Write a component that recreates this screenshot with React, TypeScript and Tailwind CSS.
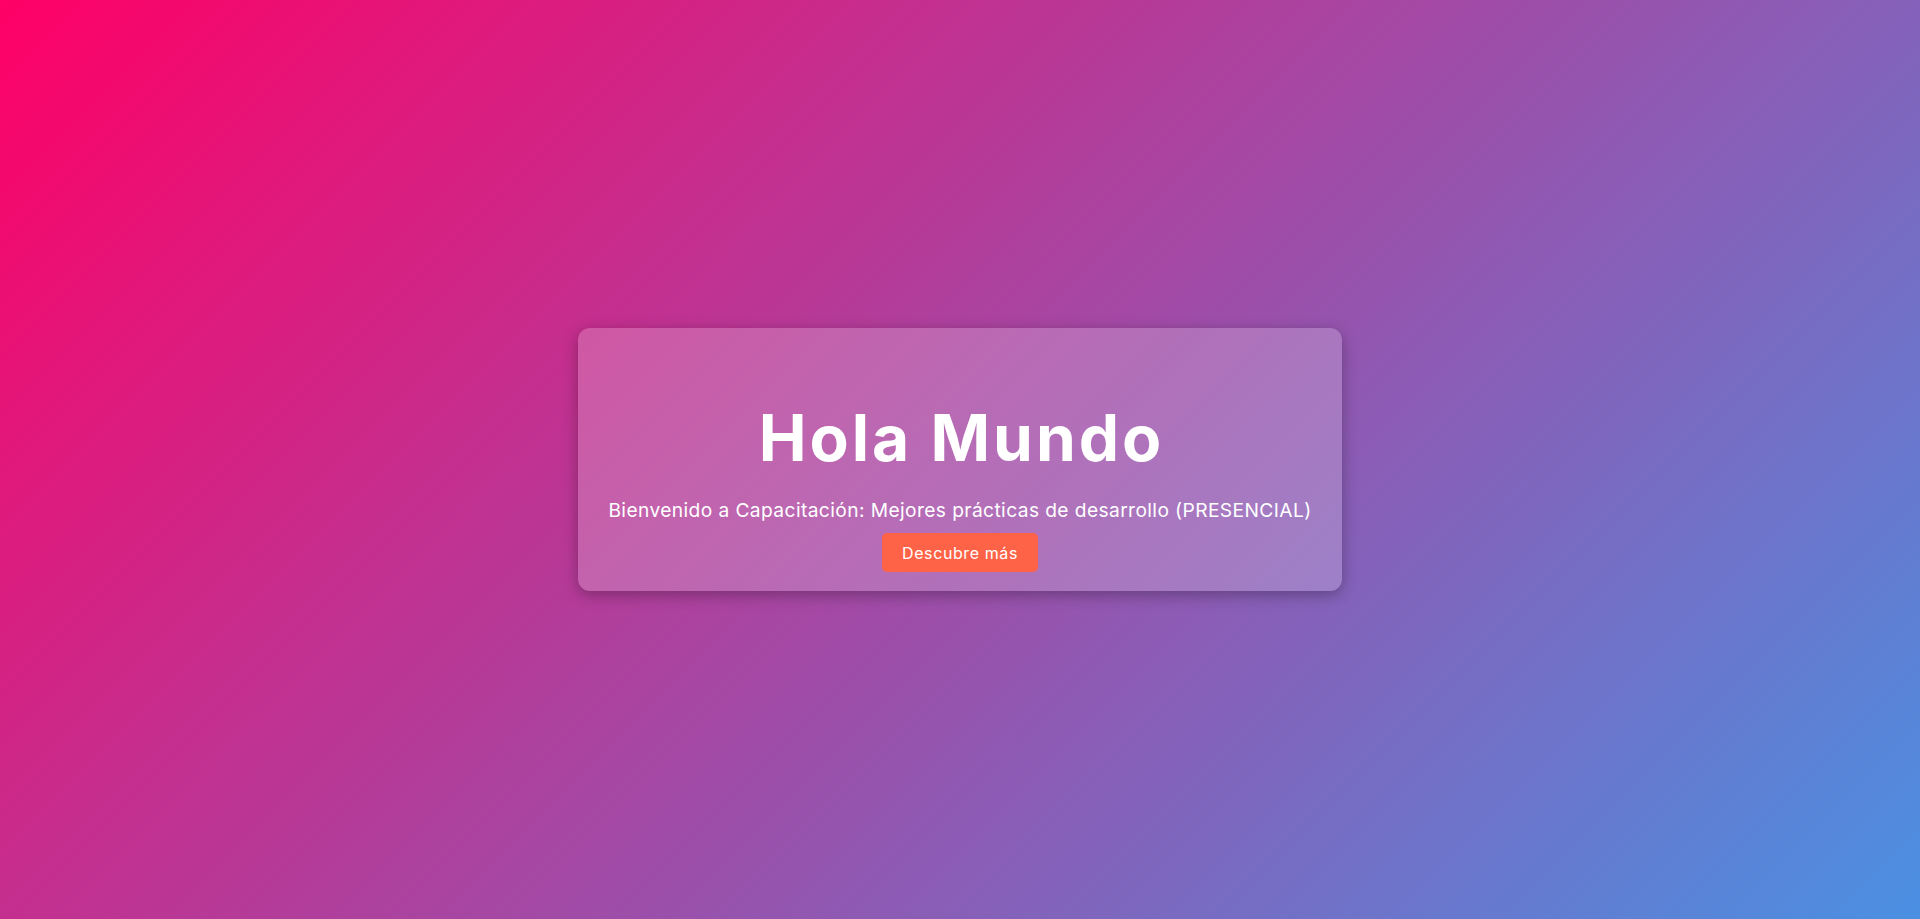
import React from 'react';

const App: React.FC = () => {
  return (
    <div className="h-screen w-full flex items-center justify-center bg-[linear-gradient(135deg,#ff0066,#4a90e2)] font-['Inter',sans-serif] text-white">
      <div className="w-[764px] rounded-xl bg-white/20 shadow-[0_4px_15px_rgba(0,0,0,0.3)] pt-[78px] pb-[19px] text-center flex flex-col items-center">
        <h1 className="text-[64px] leading-none font-bold tracking-[3px] pl-[3px]">Hola Mundo</h1>
        <p className="mt-[28px] text-[19.2px] leading-[24px] tracking-[0.4px]">
          Bienvenido a Capacitación: Mejores prácticas de desarrollo (PRESENCIAL)
        </p>
        <button className="mt-[11px] h-[39px] w-[156px] rounded-[5px] bg-[#ff6347] text-base tracking-[0.6px] text-white">
          Descubre más
        </button>
      </div>
    </div>
  );
};

export default App;
